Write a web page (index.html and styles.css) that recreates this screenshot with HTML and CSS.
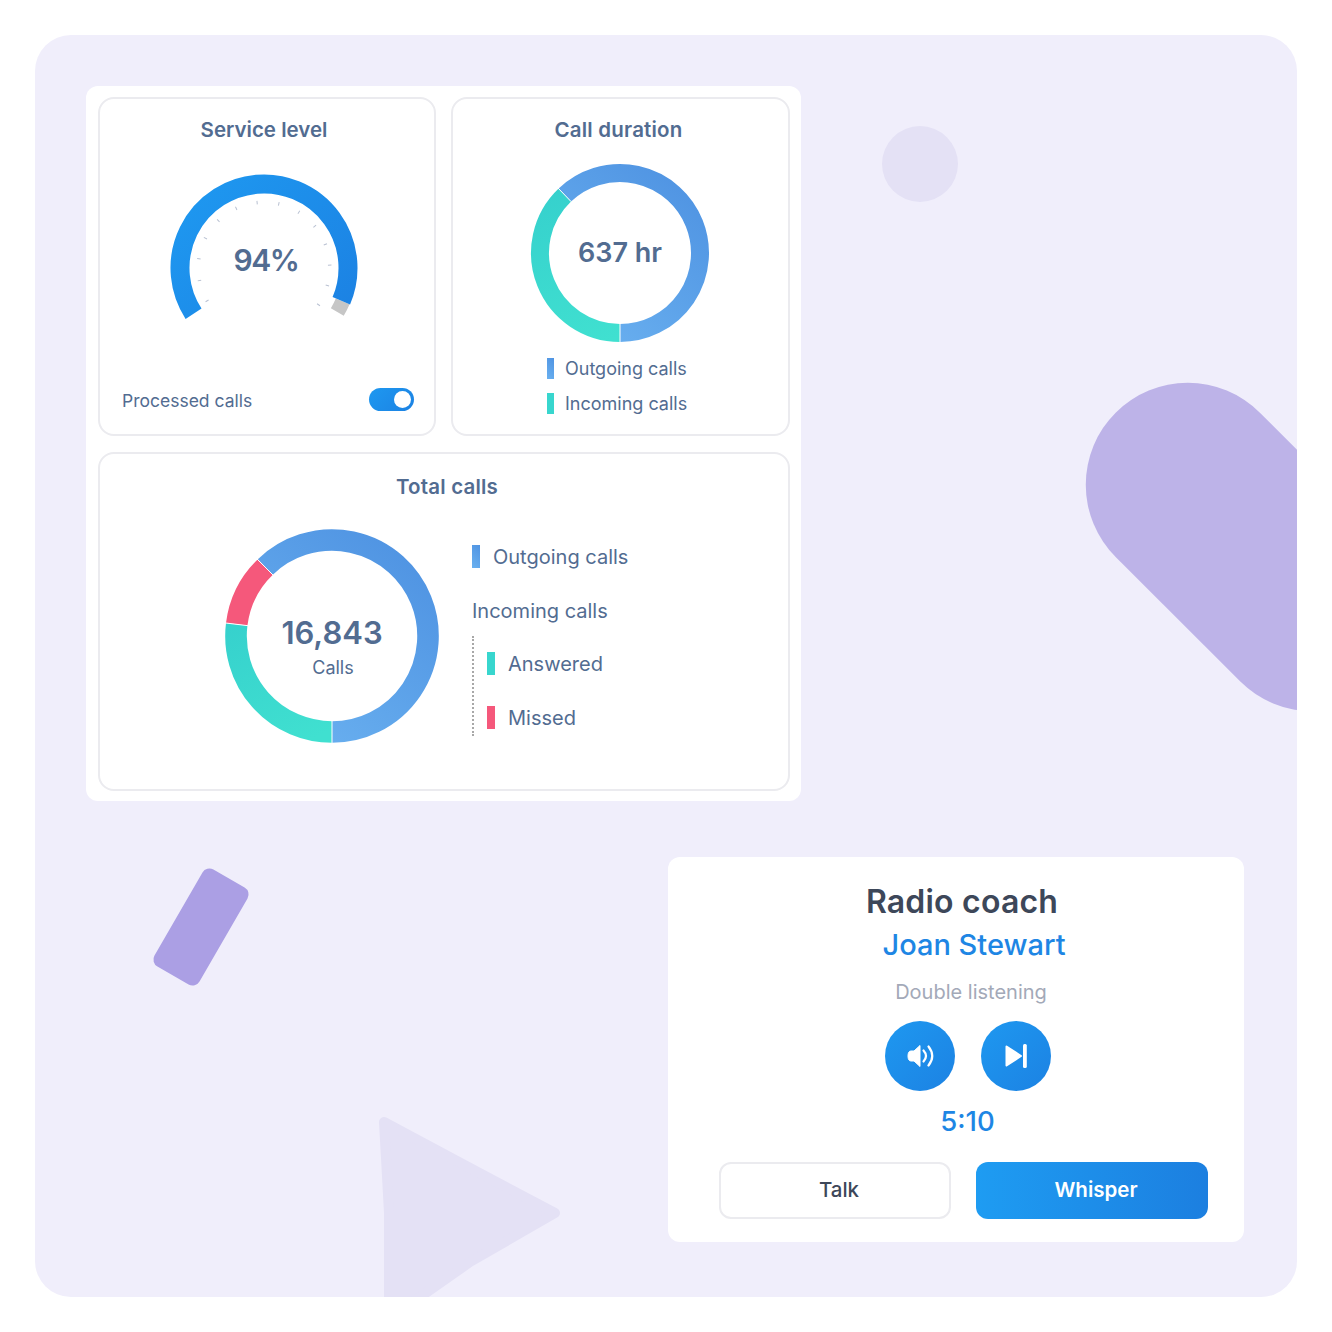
FILE: index.html
```html
<!DOCTYPE html>
<html lang="en">
<head>
    <meta charset="UTF-8">
    <meta name="viewport" content="width=device-width, initial-scale=1.0">
    <title>Call center dashboard</title>
    <link rel="stylesheet" href="styles.css">
</head>
<body>
    <div class="frame">
        <!-- background shapes -->
        <div class="shape-circle"></div>
        <div class="shape-capsule"></div>
        <div class="shape-rect"></div>
        <svg class="shape-triangle" width="190" height="200" viewBox="0 0 190 200">
            <polygon points="9,12 95,58 180,103 95,152 38,192 14,200 14,103"></polygon>
        </svg>

        <div class="panel">
            <div class="card">
                <h3 class="card-title title-service">Service level</h3>
                <div class="gauge">
                    <svg class="stacked" width="200" height="160" viewBox="0 0 200 160">
                        <defs>
                            <linearGradient id="gaugeBlue" gradientUnits="userSpaceOnUse" x1="30" y1="10" x2="180" y2="150">
                                <stop offset="0" stop-color="#1e98f0"></stop>
                                <stop offset="1" stop-color="#1c82e3"></stop>
                            </linearGradient>
                        </defs>
                        <g class="ticks">
                            <line x1="164" y1="100" x2="167.5" y2="100" transform="rotate(34 100 100)"></line>
                            <line x1="164" y1="100" x2="167.5" y2="100" transform="rotate(15.5 100 100)"></line>
                            <line x1="164" y1="100" x2="167.5" y2="100" transform="rotate(-2.5 100 100)"></line>
                            <line x1="164" y1="100" x2="167.5" y2="100" transform="rotate(-21 100 100)"></line>
                            <line x1="164" y1="100" x2="167.5" y2="100" transform="rotate(-39.5 100 100)"></line>
                            <line x1="164" y1="100" x2="167.5" y2="100" transform="rotate(-58 100 100)"></line>
                            <line x1="164" y1="100" x2="167.5" y2="100" transform="rotate(-77 100 100)"></line>
                            <line x1="164" y1="100" x2="167.5" y2="100" transform="rotate(-96 100 100)"></line>
                            <line x1="164" y1="100" x2="167.5" y2="100" transform="rotate(-115 100 100)"></line>
                            <line x1="164" y1="100" x2="167.5" y2="100" transform="rotate(-134 100 100)"></line>
                            <line x1="164" y1="100" x2="167.5" y2="100" transform="rotate(-153 100 100)"></line>
                            <line x1="164" y1="100" x2="167.5" y2="100" transform="rotate(-172 100 100)"></line>
                            <line x1="164" y1="100" x2="167.5" y2="100" transform="rotate(-191 100 100)"></line>
                            <line x1="164" y1="100" x2="167.5" y2="100" transform="rotate(-210 100 100)"></line>
                        </g>
                        <path d="M178.7 133.4 A85.5 85.5 0 0 1 173.3 144" fill="none" stroke="#c6c6c6" stroke-width="15"></path>
                        <path d="M29.55 145.75 A84 84 0 1 1 177.32 132.82" fill="none" stroke="url(#gaugeBlue)" stroke-width="19"></path>
                    </svg>
                    <div class="gauge-value">94%</div>
                </div>
                <div class="card-footer">
                    <span class="footer-label">Processed calls</span>
                    <span class="toggle"><span class="toggle-knob"></span></span>
                </div>
            </div>

            <div class="card">
                <h3 class="card-title title-duration">Call duration</h3>
                <div class="donut donut-small">
                    <svg class="stacked" width="180" height="180" viewBox="0 0 180 180">
                        <defs>
                            <linearGradient id="blueSmall" gradientUnits="userSpaceOnUse" x1="170" y1="20" x2="40" y2="170">
                                <stop offset="0" stop-color="#4f93e2"></stop>
                                <stop offset="1" stop-color="#6ab1f0"></stop>
                            </linearGradient>
                            <linearGradient id="tealSmall" gradientUnits="userSpaceOnUse" x1="20" y1="30" x2="70" y2="180">
                                <stop offset="0" stop-color="#36d1cd"></stop>
                                <stop offset="1" stop-color="#40e0d0"></stop>
                            </linearGradient>
                        </defs>
                        <path d="M34.83 32.06 A80 80 0 1 1 90 170" fill="none" stroke="url(#blueSmall)" stroke-width="18"></path>
                        <path d="M90 170 A80 80 0 0 1 34.83 32.06" fill="none" stroke="url(#tealSmall)" stroke-width="18"></path>
                        <line x1="90" y1="160" x2="90" y2="180" stroke="#fff"></line>
                        <line x1="41" y1="38.5" x2="27.5" y2="24.5" stroke="#fff"></line>
                    </svg>
                    <div class="donut-center stacked">
                        <div class="value-small">637 hr</div>
                    </div>
                </div>
                <div class="legend-small">
                    <div class="legend-row"><span class="marker marker-blue"></span>Outgoing calls</div>
                    <div class="legend-row"><span class="marker marker-teal"></span>Incoming calls</div>
                </div>
            </div>

            <div class="card card-wide">
                <h3 class="card-title title-total">Total calls</h3>
                <div class="total-body">
                    <div class="donut">
                        <svg class="stacked" width="216" height="216" viewBox="0 0 216 216">
                            <defs>
                                <linearGradient id="blueBig" gradientUnits="userSpaceOnUse" x1="200" y1="25" x2="50" y2="205">
                                    <stop offset="0" stop-color="#4f93e2"></stop>
                                    <stop offset="1" stop-color="#6ab1f0"></stop>
                                </linearGradient>
                                <linearGradient id="tealBig" gradientUnits="userSpaceOnUse" x1="20" y1="90" x2="80" y2="215">
                                    <stop offset="0" stop-color="#36d1cd"></stop>
                                    <stop offset="1" stop-color="#40e0d0"></stop>
                                </linearGradient>
                            </defs>
                            <path d="M41.31 38.95 A96 96 0 1 1 108 204" fill="none" stroke="url(#blueBig)" stroke-width="21.6"></path>
                            <path d="M108 204 A96 96 0 0 1 12.72 96.3" fill="none" stroke="url(#tealBig)" stroke-width="21.6"></path>
                            <path d="M12.72 96.3 A96 96 0 0 1 41.31 38.95" fill="none" stroke="#f5587b" stroke-width="21.6"></path>
                            <line x1="108" y1="192" x2="108" y2="216" stroke="#fff"></line>
                            <line x1="24" y1="97.7" x2="0" y2="94.8" stroke="#fff"></line>
                            <line x1="49.5" y1="47.5" x2="32" y2="30" stroke="#fff"></line>
                        </svg>
                        <div class="donut-center stacked">
                            <div class="value-big">16,843</div>
                            <div class="value-caption">Calls</div>
                        </div>
                    </div>
                    <div class="legend-big">
                        <div class="legend-row"><span class="marker marker-blue"></span>Outgoing calls</div>
                        <div class="legend-heading">Incoming calls</div>
                        <div class="legend-group">
                            <div class="legend-row"><span class="marker marker-teal"></span>Answered</div>
                            <div class="legend-row"><span class="marker marker-pink"></span>Missed</div>
                        </div>
                    </div>
                </div>
            </div>
        </div>

        <div class="coach">
            <h2 class="coach-title">Radio coach</h2>
            <div class="coach-name">Joan Stewart</div>
            <div class="coach-sub">Double listening</div>
            <div class="coach-controls">
                <button class="round-btn">
                    <svg width="32" height="32" viewBox="-16 -16 32 32">
                        <path d="M0 -10.5 L-6 -5 H-9 Q-12 -5 -12 0 Q-12 5 -9 5 H-6 L0 10.5 Z" fill="#fff" stroke="#fff" stroke-linejoin="round"></path>
                        <path d="M3.5 -5.5 Q8.5 0 3.5 5.5" fill="none" stroke="#fff" stroke-width="2.2" stroke-linecap="round"></path>
                        <path d="M8.5 -9.5 Q16 0 8.5 9.5" fill="none" stroke="#fff" stroke-width="2.2" stroke-linecap="round"></path>
                    </svg>
                </button>
                <button class="round-btn">
                    <svg width="32" height="32" viewBox="-16 -16 32 32">
                        <path d="M-9.5 -9.5 L5 0 L-9.5 9.5 Z" fill="#fff" stroke="#fff" stroke-width="2" stroke-linejoin="round"></path>
                        <rect x="7" y="-12" width="3.8" height="24" rx="1.5" fill="#fff"></rect>
                    </svg>
                </button>
            </div>
            <div class="coach-time">5:10</div>
            <div class="coach-actions">
                <button class="action-btn action-talk">Talk</button>
                <button class="action-btn action-whisper">Whisper</button>
            </div>
        </div>
    </div>
</body>
</html>
```

FILE: styles.css
```css
* {
    margin: 0;
    padding: 0;
    box-sizing: border-box;
}

body {
    font-family: Inter, 'Liberation Sans', sans-serif;
    background: #fff;
    padding: 35px;
    color: #526c91;
}

.frame {
    position: relative;
    width: 1262px;
    height: 1262px;
    padding: 51px 53px 0 51px;
    background: #f0eefb;
    border-radius: 36px;
    overflow: hidden;
    display: flex;
    flex-direction: column;
}

/* background shapes */
.shape-circle {
    position: absolute;
    left: 847px;
    top: 91px;
    width: 76px;
    height: 76px;
    border-radius: 50%;
    background: #e4e1f5;
}

.shape-capsule {
    position: absolute;
    left: 1025px;
    top: 410px;
    width: 380px;
    height: 204px;
    border-radius: 102px;
    background: #bdb3e8;
    transform: rotate(45deg);
}

.shape-rect {
    position: absolute;
    left: 140px;
    top: 836px;
    width: 52px;
    height: 112px;
    border-radius: 8px;
    background: #ab9fe4;
    transform: rotate(30deg);
}

.shape-triangle {
    position: absolute;
    left: 340px;
    top: 1075px;
}

.shape-triangle polygon {
    fill: #e4e1f5;
    stroke: #e4e1f5;
    stroke-width: 10;
    stroke-linejoin: round;
}

/* dashboard panel */
.panel {
    position: relative;
    width: 715px;
    height: 715px;
    padding: 11px 11px 9px 12px;
    background: #fff;
    border-radius: 12px;
    display: grid;
    grid-template-columns: 338px 339px;
    grid-template-rows: 339px 339px;
    gap: 16px 15px;
}

.card {
    border: 2px solid #ebebef;
    border-radius: 16px;
    padding-top: 17px;
    display: flex;
    flex-direction: column;
    min-width: 0;
}

.card-wide {
    grid-column: 1 / 3;
    padding-top: 19px;
}

.card-title {
    font-size: 20.5px;
    line-height: 28px;
    font-weight: 600;
    text-align: center;
}

.title-service {
    padding-right: 6px;
}

.title-duration {
    padding-right: 4px;
    letter-spacing: 0.2px;
}

.title-total {
    padding-left: 6px;
    letter-spacing: 0.2px;
}

.stacked {
    grid-area: 1 / 1;
}

/* gauge */
.gauge {
    display: grid;
    width: 200px;
    margin: 24px 0 0 64px;
}

.ticks line {
    stroke: #b9c1d2;
    stroke-width: 1;
}

.gauge-value {
    grid-area: 1 / 1;
    margin: 74px 0 0 4px;
    font-size: 30px;
    line-height: 36px;
    font-weight: 600;
    letter-spacing: -1.5px;
    text-align: center;
}

.card-footer {
    margin-top: auto;
    padding: 0 20px 23px 22px;
    display: flex;
    justify-content: space-between;
    align-items: center;
}

.footer-label {
    font-size: 17.5px;
    padding-top: 2px;
}

.toggle {
    width: 45px;
    height: 23px;
    padding: 3px;
    border-radius: 12px;
    background: linear-gradient(135deg, #1e98f0, #1c82e3);
    display: flex;
    justify-content: flex-end;
}

.toggle-knob {
    width: 17px;
    height: 17px;
    border-radius: 50%;
    background: #fff;
}

/* donuts */
.donut {
    display: grid;
    flex-shrink: 0;
}

.donut-small {
    align-self: flex-start;
    margin: 19px 0 0 77px;
}

.donut-center {
    display: flex;
    flex-direction: column;
    align-items: center;
    justify-content: center;
}

.value-small {
    font-size: 27px;
    font-weight: 600;
    line-height: 36px;
}

.value-big {
    font-size: 31px;
    font-weight: 600;
    line-height: 42px;
    margin-top: 20px;
}

.value-caption {
    font-size: 18px;
    line-height: 24px;
    margin: 2px 0 0 2px;
}

/* legends */
.legend-row {
    display: flex;
    align-items: center;
    line-height: 21px;
}

.marker {
    width: 7px;
    height: 21px;
    flex-shrink: 0;
}

.marker-blue {
    background: linear-gradient(45deg, #6ab1f0, #4f93e2);
}

.marker-teal {
    background: #38d6ce;
}

.marker-pink {
    background: #f5587b;
}

.legend-small {
    margin: 15px 0 0 94px;
    display: flex;
    flex-direction: column;
    gap: 14px;
    font-size: 18px;
}

.legend-small .marker {
    margin-right: 11px;
}

.total-body {
    display: flex;
    margin: 27px 0 0 124px;
}

.legend-big {
    margin: 18px 0 0 32px;
    font-size: 20px;
}

.legend-big .legend-row {
    line-height: 23px;
}

.legend-big .marker {
    height: 23px;
    width: 8px;
    margin: -2px 13px 0 0;
}

.legend-heading {
    margin-top: 31px;
    line-height: 23px;
}

.legend-group {
    margin-top: 13px;
    padding: 17px 0 0 13px;
    height: 100px;
    border-left: 2px dotted #a8a8a8;
    display: flex;
    flex-direction: column;
    gap: 31px;
}

/* radio coach */
.coach {
    position: relative;
    align-self: flex-end;
    width: 576px;
    height: 385px;
    margin-top: 56px;
    padding: 25px 36px 0 51px;
    background: #fff;
    border-radius: 12px;
    text-align: center;
}

.coach-title {
    font-size: 32px;
    line-height: 40px;
    font-weight: 600;
    letter-spacing: 0.2px;
    color: #3d4759;
    padding-right: 3px;
}

.coach-name {
    font-size: 29px;
    line-height: 36px;
    margin-top: 5px;
    font-weight: 500;
    color: #1e86e4;
    padding-left: 21px;
}

.coach-sub {
    font-size: 20px;
    line-height: 26px;
    margin-top: 16px;
    color: #a3a9b8;
    padding-left: 15px;
}

.coach-controls {
    display: flex;
    justify-content: center;
    gap: 26px;
    margin-top: 16px;
    padding-left: 9px;
}

.round-btn {
    width: 70px;
    height: 70px;
    border: none;
    border-radius: 50%;
    background: linear-gradient(135deg, #1e98f0, #1c82e3);
    display: flex;
    align-items: center;
    justify-content: center;
}

.coach-time {
    font-size: 27.5px;
    line-height: 32px;
    margin-top: 14px;
    font-weight: 500;
    color: #1e86e4;
    padding-left: 8px;
}

.coach-actions {
    display: flex;
    justify-content: space-between;
    margin-top: 25px;
}

.action-btn {
    width: 232px;
    height: 57px;
    padding: 0 0 2px 8px;
    border-radius: 12px;
    font-family: Inter, 'Liberation Sans', sans-serif;
    font-size: 20.5px;
    font-weight: 500;
}

.action-talk {
    background: #fff;
    border: 2px solid #ebebef;
    color: #3d4759;
}

.action-whisper {
    border: none;
    background: linear-gradient(90deg, #1e9cf2, #1c7fe0);
    color: #fff;
    font-weight: 600;
}
```
